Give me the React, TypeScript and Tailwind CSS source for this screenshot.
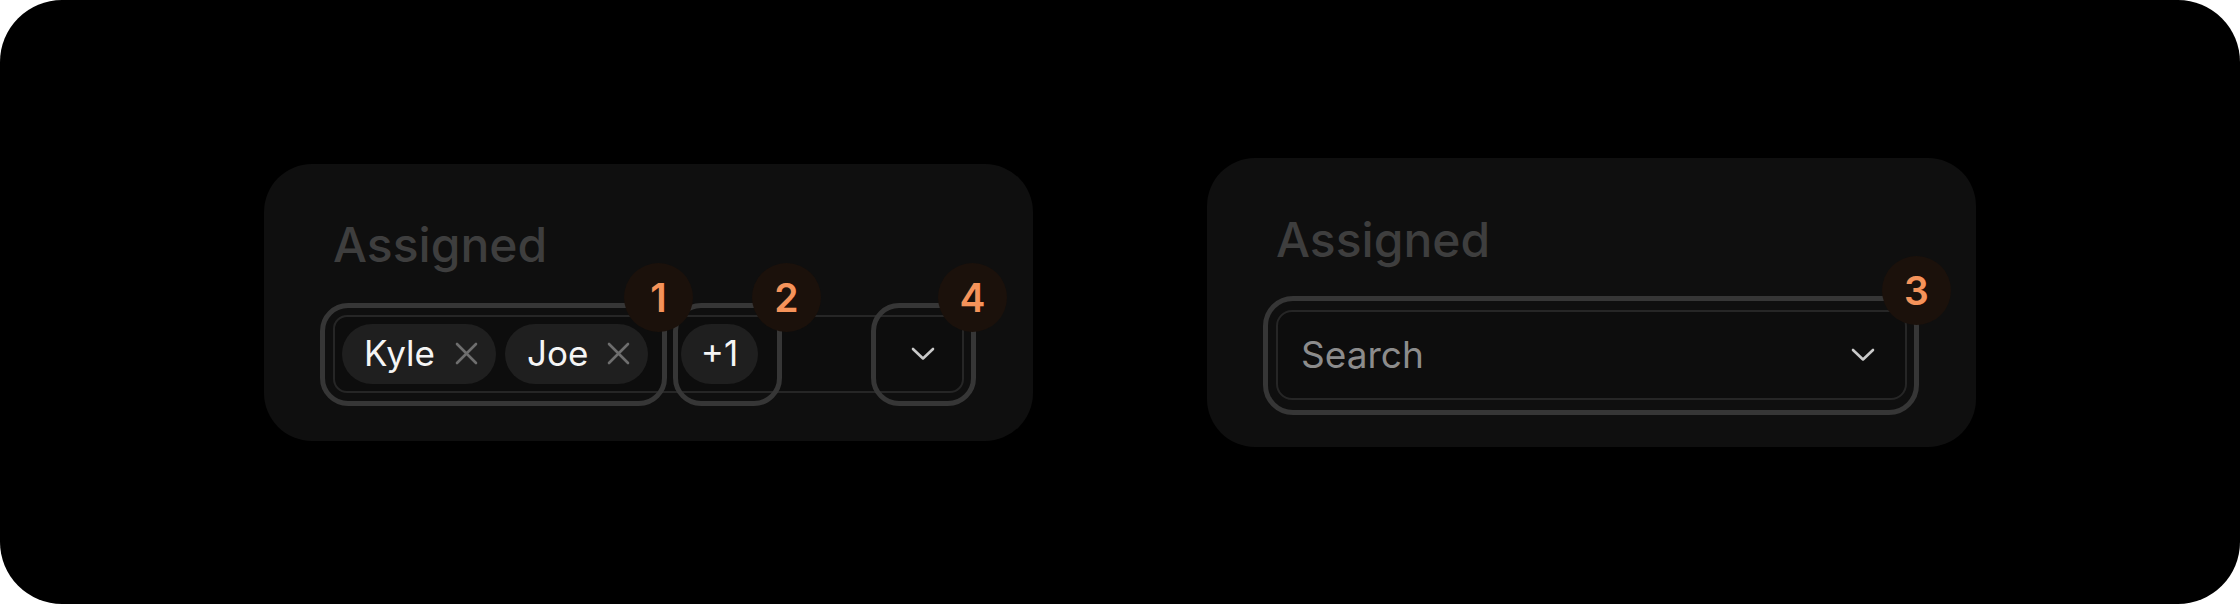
import React from "react";

const font = { fontFamily: "Inter, 'Noto Sans', sans-serif" };

const XIcon = () => (
  <svg width="23" height="23" viewBox="0 0 23 23" fill="none">
    <path d="M2 2L21 21M21 2L2 21" stroke="#6e6e6e" strokeWidth="2.6" strokeLinecap="round" />
  </svg>
);

const Chevron = () => (
  <svg width="24" height="14" viewBox="0 0 24 14" fill="none">
    <path d="M2 2L12 11.5L22 2" stroke="#c9c9c9" strokeWidth="2.6" strokeLinecap="round" strokeLinejoin="round" />
  </svg>
);

const Badge = ({ n, className }: { n: string; className: string }) => (
  <div
    className={`absolute w-[69px] h-[69px] rounded-full bg-[#1b110b] text-[#f5935a] flex items-center justify-center text-[39px] font-semibold leading-none ${className}`}
  >
    {n}
  </div>
);

const Chip = ({ name, className }: { name: string; className: string }) => (
  <div className={`h-[60px] rounded-full bg-[#1f1f1f] flex items-center justify-between pl-[22px] pr-[18px] ${className}`}>
    <span className="text-[35px] text-[#f5f5f5] leading-none">{name}</span>
    <XIcon />
  </div>
);

export default function App() {
  return (
    <div className="bg-white w-full h-[604px]" style={font}>
      <div className="bg-black w-full h-full rounded-[62px] flex items-center justify-center gap-[174px]">
        {/* Multi-select with chips */}
        <div className="bg-[#0f0f0f] rounded-[48px] px-[69px] pt-[57px] pb-[48px] flex flex-col gap-[46px]">
          <div className="text-[48px] leading-[48px] font-medium text-[#3e3e3e]">Assigned</div>
          <div className="relative w-[631px] h-[78px]">
            <div className="w-full h-full border-2 border-[#262626] rounded-[14px] bg-[#0d0d0d] flex items-center pl-[7px] pr-[27px]">
              <Chip name="Kyle" className="w-[154px]" />
              <Chip name="Joe" className="w-[143px] ml-[9px]" />
              <div className="w-[77px] h-[60px] ml-[33px] rounded-full bg-[#1f1f1f] flex items-center justify-center">
                <span className="text-[35px] text-[#f5f5f5] leading-none">+1</span>
              </div>
              <div className="ml-auto">
                <Chevron />
              </div>
            </div>
            {/* annotation rings */}
            <div className="absolute left-[-13px] top-[-12px] w-[347px] h-[103px] border-[5px] border-[#363636] rounded-[28px]" />
            <div className="absolute left-[340px] top-[-12px] w-[109px] h-[103px] border-[5px] border-[#363636] rounded-[28px]" />
            <div className="absolute left-[538px] top-[-12px] w-[105px] h-[103px] border-[5px] border-[#363636] rounded-[28px]" />
            <Badge n="1" className="left-[291px] top-[-52px]" />
            <Badge n="2" className="left-[419px] top-[-52px]" />
            <Badge n="4" className="left-[605px] top-[-52px]" />
          </div>
        </div>

        {/* Search select */}
        <div className="bg-[#0f0f0f] rounded-[48px] px-[69px] pt-[58px] pb-[47px] flex flex-col gap-[46px]">
          <div className="text-[48px] leading-[48px] font-medium text-[#3e3e3e]">Assigned</div>
          <div className="relative w-[631px] h-[90px]">
            <div className="w-full h-full border-2 border-[#262626] rounded-[16px] bg-[#0d0d0d] flex items-center justify-between pl-[23px] pr-[30px]">
              <span className="text-[37px] text-[#8c8c8c] leading-none">Search</span>
              <Chevron />
            </div>
            <div className="absolute left-[-13px] top-[-14px] w-[656px] h-[119px] border-[5px] border-[#363636] rounded-[30px]" />
            <Badge n="3" className="left-[606px] top-[-54px]" />
          </div>
        </div>
      </div>
    </div>
  );
}
